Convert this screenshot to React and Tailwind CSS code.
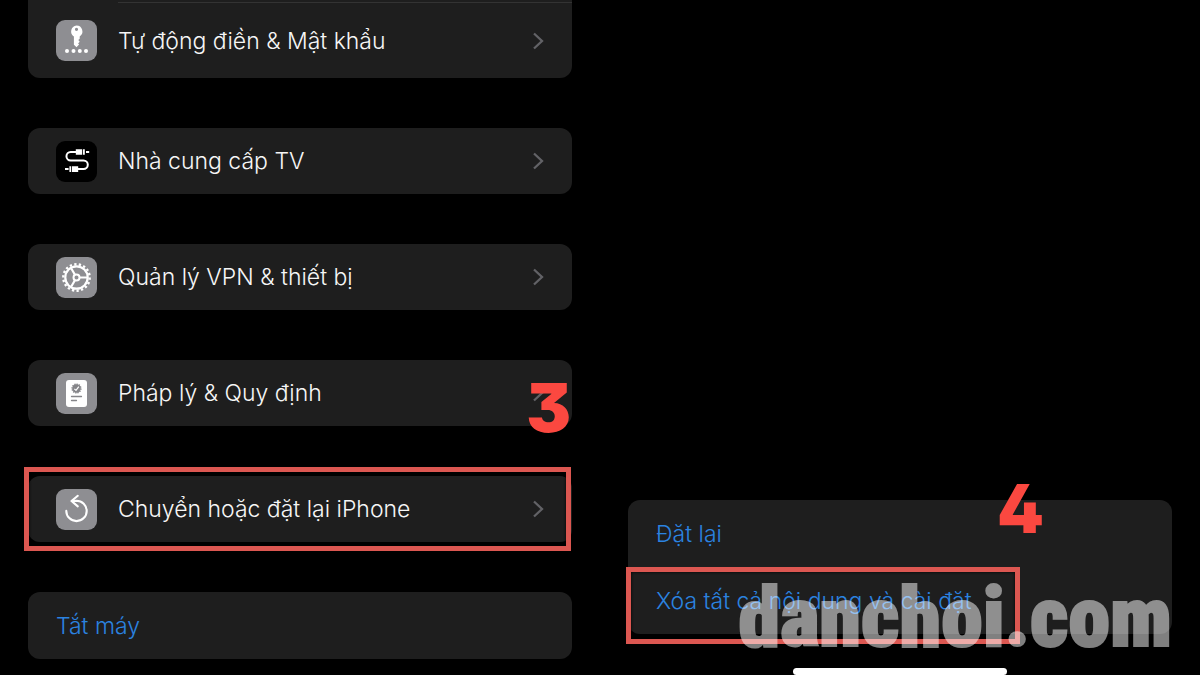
// small rounded tile that holds the icon of each settings row
function IconTile({ dark, children }) {
  return (
    <svg
      viewBox="0 0 41 41"
      aria-hidden="true"
      className={
        dark
          ? "h-[41px] w-[41px] shrink-0 rounded-[9px] bg-black"
          : "h-[41px] w-[41px] shrink-0 rounded-[9px] bg-[#8e8e92]"
      }
    >
      {children}
    </svg>
  );
}

function KeyIcon() {
  return (
    <IconTile>
      <path
        fill="#fff"
        fillRule="evenodd"
        d="M20.5 5.5a6 6 0 0 1 3.2 11v2.2l-1.4 1.4 1.4 1.6-1.6 1.7 1 1.2-2.6 2.6-2.6-2.4v-8.3a6 6 0 0 1 2.6-11zm0 2.2a1.6 1.6 0 1 0 0 3.2 1.6 1.6 0 0 0 0-3.2z"
      />
      <g fill="#fff">
        <circle cx="11" cy="31" r="2" />
        <circle cx="17.5" cy="31" r="2" />
        <circle cx="23.8" cy="31" r="2" />
        <circle cx="30" cy="31" r="2" />
      </g>
    </IconTile>
  );
}

function CableIcon() {
  return (
    <IconTile dark>
      <path
        fill="none"
        stroke="#fff"
        strokeWidth="2"
        d="M20.5 11h-5.8a4.25 4.25 0 0 0 0 8.5h12.8a4.3 4.3 0 0 1 0 8.6h-6M30 11h3.2M9 28.1h3.6"
      />
      <path
        fill="#fff"
        d="M19.8 8.2h6.4v5.6h-6.4zM27 8.2h1.8v5.6h-1.8zM16 25.3h6.2v5.6H16zM13.4 25.3h1.8v5.6h-1.8z"
      />
    </IconTile>
  );
}

function GearIcon() {
  return (
    <IconTile>
      <g fill="none" stroke="#fff">
        <circle cx="20.5" cy="20.5" r="11.2" strokeWidth="2.2" />
        <circle
          cx="20.5"
          cy="20.5"
          r="13.2"
          strokeWidth="2.4"
          pathLength="72"
          strokeDasharray="2 2"
        />
        <circle cx="20.5" cy="20.5" r="3" strokeWidth="2" />
        <path
          strokeWidth="2.1"
          d="M23.5 20.5h8M19 17.9l-4-6.9M19 23.1l-4 6.9"
        />
      </g>
    </IconTile>
  );
}

function DocumentIcon() {
  return (
    <IconTile>
      <rect x="10" y="7" width="21" height="27" rx="3" fill="#fff" />
      <circle cx="20.5" cy="15.5" r="4.2" fill="#858589" />
      <circle
        cx="20.5"
        cy="15.5"
        r="4.4"
        fill="none"
        stroke="#858589"
        strokeWidth="1.4"
        pathLength="24"
        strokeDasharray="1.2 0.8"
      />
      <path
        fill="none"
        stroke="#fff"
        strokeWidth="1.2"
        d="M18.4 15.8l1.6 1.6 2.8-3.8"
      />
      <path
        stroke="#858589"
        strokeWidth="1.3"
        strokeLinecap="round"
        d="M15.5 23.5h10M15.5 27.5h5"
      />
    </IconTile>
  );
}

function ResetIcon() {
  return (
    <IconTile>
      <g
        fill="none"
        stroke="#fff"
        strokeWidth="2.1"
        strokeLinecap="round"
        strokeLinejoin="round"
      >
        <path d="M10.3 21.9a10.2 10.2 0 1 0 10.2-10.2l-4.7.3" />
        <path d="M21.8 6.8l-6.3 5.2 6.3 5.4" />
      </g>
    </IconTile>
  );
}

function Chevron() {
  return (
    <svg
      viewBox="0 0 12 18"
      aria-hidden="true"
      className="ml-auto h-[18px] w-3 shrink-0"
    >
      <path
        d="M2 1.5l8 7.5-8 7.5"
        fill="none"
        stroke="#626266"
        strokeWidth="2.3"
      />
    </svg>
  );
}

function Row({ icon, label }) {
  return (
    <button
      type="button"
      className="flex h-[66px] w-full items-center rounded-xl bg-[#1e1e1e] px-7 text-left"
    >
      {icon}
      <span className="ml-[21px]">{label}</span>
      <Chevron />
    </button>
  );
}

// red frame drawn over the row to tap
const frame =
  "pointer-events-none absolute border-[5px] border-[#dc5751] shadow-[inset_0_0_3px_#000]";

// step number next to the frame
const step =
  "pointer-events-none absolute text-[67px] leading-[50px] font-black text-[#fb4840] [font-feature-settings:'cv09','cv02']";

export default function App() {
  return (
    <div className="flex min-h-screen overflow-hidden bg-black font-['Inter','Noto_Sans',sans-serif] text-[23px] leading-8 font-light text-[#f6f6f6]">
      <main className="flex w-1/2 flex-col gap-[50px] px-7">
        <div className="rounded-b-xl bg-[#1e1e1e] pt-[2px]">
          <div className="ml-[90px] h-px bg-[#333333]" />
          <button
            type="button"
            className="flex h-[75px] w-full items-center px-7 text-left"
          >
            <KeyIcon />
            <span className="ml-[21px]">Tự động điền & Mật khẩu</span>
            <Chevron />
          </button>
        </div>
        <Row icon={<CableIcon />} label="Nhà cung cấp TV" />
        <Row icon={<GearIcon />} label="Quản lý VPN & thiết bị" />
        <div className="relative">
          <Row icon={<DocumentIcon />} label="Pháp lý & Quy định" />
          <span className={`${step} top-[23px] right-px`}>3</span>
        </div>
        <div className="relative">
          <Row icon={<ResetIcon />} label="Chuyển hoặc đặt lại iPhone" />
          <div className={`${frame} -inset-y-[9px] right-px -left-1`} />
        </div>
        <button
          type="button"
          className="h-[67px] rounded-xl bg-[#1e1e1e] px-7 text-left text-[#2b83e0]"
        >
          Tắt máy
        </button>
      </main>

      <section className="flex w-1/2 flex-col justify-end px-7">
        <div className="relative rounded-xl bg-[#1e1e1e] text-[#2b83e0]">
          <button
            type="button"
            className="block h-[67px] w-full px-7 text-left"
          >
            Đặt lại
          </button>
          <div className="relative">
            <button
              type="button"
              className="block h-[67px] w-full px-7 text-left"
            >
              Xóa tất cả nội dung và cài đặt
            </button>
            <div
              className={`${frame} top-0 -bottom-[10px] -left-[2px] w-[394px]`}
            />
          </div>
          <span className={`${step} -top-4 right-32`}>4</span>
          <span className="pointer-events-none absolute right-0 -bottom-8 font-['Roboto_Condensed','Liberation_Sans_Narrow',sans-serif] text-[84px] leading-[96px] font-black text-white opacity-50 [-webkit-text-stroke:2px_white]">
            danchoi.com
          </span>
        </div>
        <div className="mx-auto mt-[34px] h-[7px] w-[214px] rounded-full bg-white" />
      </section>
    </div>
  );
}
